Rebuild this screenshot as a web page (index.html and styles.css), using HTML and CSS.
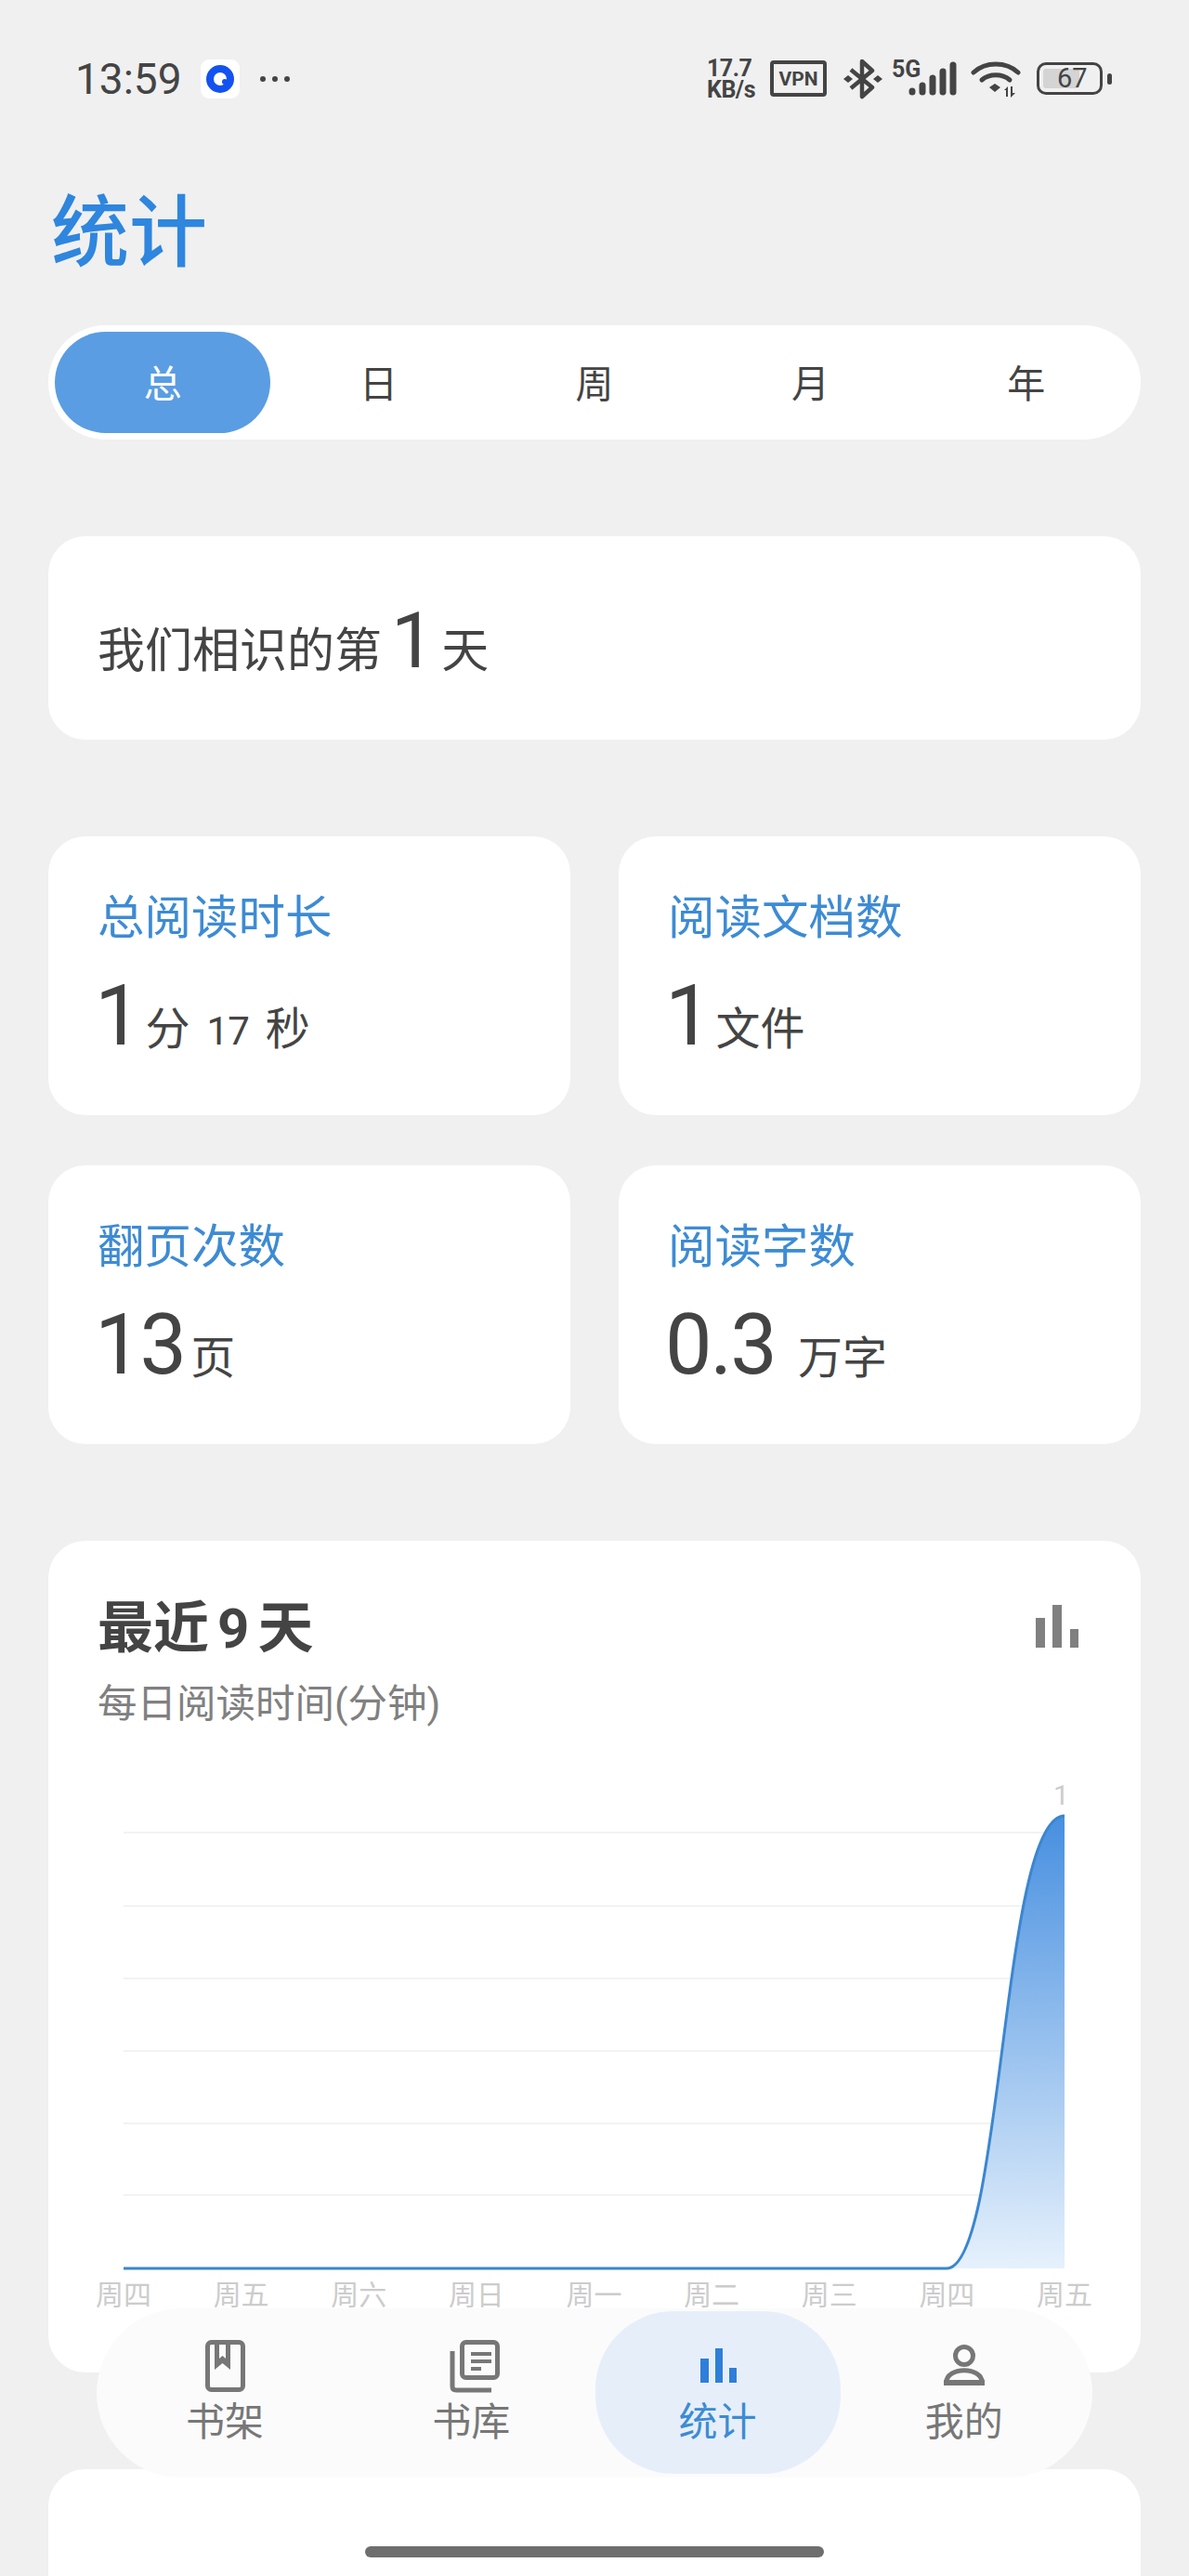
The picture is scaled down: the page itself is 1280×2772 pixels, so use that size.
FILE: index.html
```html
<!DOCTYPE html>
<html lang="zh-CN">

<head>
	<meta charset="UTF-8">
	<meta name="viewport" content="width=device-width, initial-scale=1.0">
	<title>统计</title>

	<link rel="stylesheet" href="styles.css">
</head>

<body>
	<div class="screen">
		<header class="status-bar">
			<div class="status-left">
				<span class="status-time">13:59</span>
				<span class="app-badge">
					<svg width="32" height="32" viewBox="0 0 32 32">
						<circle cx="16" cy="16" r="11" fill="none" stroke="#1352f0" stroke-width="8" />
						<circle cx="21" cy="19" r="3" fill="#1352f0" />
					</svg>
				</span>
				<svg class="status-dots" width="34" height="8" viewBox="0 0 34 8">
					<circle cx="4" cy="4" r="3" fill="#444" />
					<circle cx="17" cy="4" r="3" fill="#444" />
					<circle cx="30" cy="4" r="3" fill="#444" />
				</svg>
			</div>
			<div class="status-right">
				<span class="net-speed">17.7<br>KB/s</span>
				<span class="vpn-badge">VPN</span>
				<svg class="bluetooth-icon" width="42" height="44" viewBox="0 0 42 44">
					<path d="M8 12 L31 31 L20 41 V3 L31 13 L8 32" fill="none" stroke="#444" stroke-width="4.5" stroke-linejoin="round" />
					<path d="M5 18 L10 22 L5 26 L0 22 Z M37 18 L42 22 L37 26 L32 22 Z" fill="#444" />
				</svg>
				<svg class="signal-icon" width="70" height="52" viewBox="0 -8 70 52">
					<text x="0" y="20" class="signal-label">5G</text>
					<g fill="none" stroke="#444" stroke-width="7" stroke-linecap="round">
						<path d="M22 35 V36" />
						<path d="M33 29 V36" />
						<path d="M44 21 V36" />
						<path d="M55 14 V36" />
						<path d="M66 7 V36" />
					</g>
				</svg>
				<svg class="wifi-icon" width="54" height="40" viewBox="0 0 54 40">
					<g fill="none" stroke="#444" stroke-width="5" stroke-linecap="round">
						<path d="M3 13 C16 1 38 1 51 13" />
						<path d="M12 21 C20 14 34 14 42 21" />
					</g>
					<path d="M20 29 L26 25 L32 29 L26 34 Z" fill="#444" />
					<path d="M36 32 L40 28 V39 H38 V32 Z M43 28 H45 V35 H48 L43 40 Z" fill="#444" />
				</svg>
				<span class="battery">
					<span class="battery-fill"></span>
					<span class="battery-text">67</span>
				</span>
				<span class="battery-cap"></span>
			</div>
		</header>

		<main class="content">
			<div class="top-block">
				<h1 class="page-title">统计</h1>
				<nav class="period-tabs">
					<span class="period-tab period-tab-active">总</span>
					<span class="period-tab">日</span>
					<span class="period-tab">周</span>
					<span class="period-tab">月</span>
					<span class="period-tab">年</span>
				</nav>
			</div>

			<section class="card days-card">
				我们相识的第<span class="days-num">1</span>天
			</section>

			<section class="stat-grid">
				<div class="card stat-card">
					<div class="stat-title">总阅读时长</div>
					<div class="stat-value"><span class="big-num">1</span><span class="unit">分</span><span class="unit unit-num">17</span><span class="unit unit-after-num">秒</span></div>
				</div>
				<div class="card stat-card">
					<div class="stat-title">阅读文档数</div>
					<div class="stat-value"><span class="big-num">1</span><span class="unit">文件</span></div>
				</div>
				<div class="card stat-card">
					<div class="stat-title">翻页次数</div>
					<div class="stat-value"><span class="big-num">13</span><span class="unit">页</span></div>
				</div>
				<div class="card stat-card">
					<div class="stat-title">阅读字数</div>
					<div class="stat-value"><span class="big-num">0.3</span><span class="unit unit-wide">万字</span></div>
				</div>
			</section>

			<section class="card chart-card">
				<div class="chart-head">
					<div>
						<h2 class="chart-title">最近<span class="chart-days">9</span>天</h2>
						<p class="chart-sub">每日阅读时间(分钟)</p>
					</div>
					<svg class="chart-toggle" width="48" height="48" viewBox="0 0 48 48">
						<path d="M1 15 H11 V47 H1 Z M19 1 H29 V47 H19 Z M38 27 H47 V47 H38 Z" fill="#808080" />
					</svg>
				</div>

				<svg class="chart-plot" width="1176" height="553" viewBox="0 0 1176 553">
					<defs>
						<linearGradient id="area-fill" x1="0" y1="0" x2="0" y2="1">
							<stop offset="0" stop-color="#478fe0" />
							<stop offset="1" stop-color="#e6f1fc" />
						</linearGradient>
					</defs>
					<g stroke="#f3f3f3" stroke-width="2">
						<path d="M81 72 H1094" />
						<path d="M81 151 H1094" />
						<path d="M81 229 H1094" />
						<path d="M81 307 H1094" />
						<path d="M81 385 H1094" />
						<path d="M81 462 H1094" />
					</g>
					<path d="M967 541 C1028 541 1026 54 1094 54 V541 Z" fill="url(#area-fill)" />
					<path d="M81 541 H967 C1028 541 1026 54 1094 54" fill="none" stroke="#3b86cf" stroke-width="3" />
					<text x="1082" y="42" class="chart-point">1</text>
				</svg>

				<div class="chart-axis">
					<span>周四</span>
					<span>周五</span>
					<span>周六</span>
					<span>周日</span>
					<span>周一</span>
					<span>周二</span>
					<span>周三</span>
					<span>周四</span>
					<span>周五</span>
				</div>
			</section>

			<section class="card last-card"></section>
		</main>

		<!-- floating bottom navigation, sits over the cards -->
		<nav class="bottom-nav">
			<div class="nav-item">
				<svg width="64" height="64" viewBox="0 0 64 64">
					<rect x="13.500" y="6.500" width="38" height="51" rx="4" fill="none" stroke="#777" stroke-width="5" />
					<path d="M21 6 H38 V36 L29.500 29 L21 36 Z" fill="#777" />
					<path d="M26 9 H33 V24 L29.500 21 L26 24 Z" fill="#fbfbfb" />
				</svg>
				<span class="nav-label">书架</span>
			</div>
			<div class="nav-item">
				<svg width="64" height="64" viewBox="0 0 64 64">
					<rect x="22.500" y="6.500" width="38" height="38" rx="4" fill="none" stroke="#777" stroke-width="5" />
					<path d="M32 17 H54 V21 H32 Z M32 25 H54 V29 H32 Z M32 33 H43 V37 H32 Z" fill="#777" />
					<path d="M12 16 V54 Q12 58 16 58 H54" fill="none" stroke="#777" stroke-width="5" />
				</svg>
				<span class="nav-label">书库</span>
			</div>
			<div class="nav-item nav-item-active">
				<svg width="64" height="64" viewBox="0 0 64 64">
					<path d="M13 24 H22 V50 H13 Z M29 13 H37 V50 H29 Z M44 34 H52 V50 H44 Z" fill="#2e7fd9" />
				</svg>
				<span class="nav-label">统计</span>
			</div>
			<div class="nav-item">
				<svg width="64" height="64" viewBox="0 0 64 64">
					<circle cx="32" cy="21" r="9.500" fill="none" stroke="#777" stroke-width="5" />
					<path d="M12.500 50.500 C12.500 32 51.500 32 51.500 50.500 Z" fill="none" stroke="#777" stroke-width="5" stroke-linejoin="round" />
					<path d="M10 47 H54 V53 H10 Z" fill="#777" />
				</svg>
				<span class="nav-label">我的</span>
			</div>
		</nav>

		<div class="home-bar"></div>
	</div>
</body>

</html>
```

FILE: styles.css
```css
* {
	margin: 0;
	padding: 0;
	box-sizing: border-box;
}

body {
	--text-color: #444;
	--blue-color: #3d8bd4;
	--title-color: #2e86de;
	--muted-color: #808080;
	--background-color: #f0f0f0;

	background-color: var(--background-color);
	color: var(--text-color);
	font-family: Roboto, "Noto Sans CJK SC", sans-serif;
}

.screen {
	width: 1280px;
	height: 2772px;

	position: relative;
	overflow: hidden;
}

/* status bar */
.status-bar {
	height: 166px;
	padding: 3px 83px 0 81px;

	display: flex;
	justify-content: space-between;
	align-items: center;
}

.status-left {
	display: flex;
	align-items: center;
}

.status-time {
	width: 135px;
	font-size: 46px;
}

.app-badge {
	width: 42px;
	height: 42px;
	margin-right: 21px;

	display: flex;
	justify-content: center;
	align-items: center;

	border-radius: 9px;
	background-color: #fff;
}

.status-right {
	display: flex;
	align-items: center;
}

.net-speed {
	width: 68px;
	font-size: 25px;
	font-weight: 700;
	line-height: 23px;
	letter-spacing: -0.5px;
}

.vpn-badge {
	width: 61px;
	height: 39px;

	display: flex;
	justify-content: center;
	align-items: center;

	border: 4px solid var(--text-color);
	border-radius: 4px;
	font-size: 21px;
	font-weight: 700;
}

.bluetooth-icon {
	margin-left: 18px;
}

.signal-icon {
	margin-left: 10px;
	margin-bottom: 8px;
}

.signal-label {
	font-size: 25px;
	font-weight: 700;
	fill: var(--text-color);
}

.wifi-icon {
	margin-left: 15px;
}

.battery {
	width: 71px;
	height: 35px;
	margin-left: 17px;
	padding: 4px;

	position: relative;
	display: flex;

	border: 3px solid var(--text-color);
	border-radius: 10px;
}

.battery-fill {
	width: 39px;
	background-color: #d4d4d4;
	border-radius: 3px;
}

.battery-text {
	position: absolute;
	left: 19px;
	top: -3px;

	font-size: 29px;
	line-height: 35px;
}

.battery-cap {
	width: 5px;
	height: 12px;
	margin-left: 5px;

	border-radius: 3px;
	background-color: var(--text-color);
}

/* page content */
.content {
	padding: 0 52px;

	display: flex;
	flex-direction: column;
	gap: 104px;
}

.page-title {
	height: 100px;
	margin: 36px 0 48px 3px;

	color: var(--title-color);
	font-size: 84px;
	font-weight: 500;
	line-height: 100px;
}

.period-tabs {
	height: 123px;
	padding: 7px;

	display: grid;
	grid-template-columns: repeat(5, 1fr);

	border-radius: 62px;
	background-color: #fff;
}

.period-tab {
	padding-bottom: 3px;

	display: flex;
	justify-content: center;
	align-items: center;

	border-radius: 55px;
	font-size: 41px;
}

.period-tab-active {
	background-color: #5a9de2;
	color: #fff;
}

.card {
	border-radius: 40px;
	background-color: #fff;
}

.days-card {
	height: 219px;
	padding: 3px 53px 0;

	display: flex;
	align-items: baseline;

	font-size: 51px;
	line-height: 219px;
}

.days-num {
	margin: 0 7px 0 10px;
	font-size: 84px;
}

.big-num {
	margin-left: -3px;
	font-size: 90px;
	letter-spacing: -2px;
}

.stat-grid {
	display: grid;
	grid-template-columns: 1fr 1fr;
	column-gap: 52px;
	row-gap: 54px;
}

.stat-card {
	height: 300px;
	padding: 58px 53px 0;
}

.stat-title {
	color: var(--blue-color);
	font-size: 50.500px;
	line-height: 60px;
}

.stat-value {
	margin-top: 26px;

	display: flex;
	align-items: baseline;

	font-size: 48px;
	line-height: 100px;
}

.unit {
	margin-left: 6px;
}

.unit-num {
	margin-left: 18px;
	font-size: 42px;
	letter-spacing: -1px;
}

.unit-after-num {
	margin-left: 18px;
}

.unit-wide {
	margin-left: 24px;
}

.chart-card {
	height: 895px;
}

.chart-head {
	height: 242px;
	padding: 55px 66px 0 53px;

	display: flex;
	justify-content: space-between;
	align-items: flex-start;
}

.chart-title {
	font-size: 60px;
	font-weight: 700;
	line-height: 80px;
}

.chart-days {
	margin: 0 9px;
}

.chart-sub {
	margin-top: 11px;

	color: var(--muted-color);
	font-size: 42.500px;
	line-height: 60px;
}

.chart-toggle {
	margin-top: 13px;
}

.chart-plot {
	display: block;
}

.chart-point {
	fill: #ccc;
	font-size: 30px;
}

.chart-axis {
	padding: 0 52px 0 51px;

	display: flex;
	justify-content: space-between;

	color: #ccc;
	font-size: 30px;
	line-height: 34px;
}

.last-card {
	height: 300px;
}

/* floating parts */
.bottom-nav {
	width: 1072px;
	height: 182px;
	padding: 3px 6px;

	position: absolute;
	left: 104px;
	top: 2484px;

	display: grid;
	grid-template-columns: repeat(4, 1fr);
	column-gap: 1px;

	border-radius: 91px;
	background-color: rgba(251, 251, 251, 0.96);
	color: #777;
}

.nav-item {
	height: 175px;
	padding-top: 27px;

	display: flex;
	flex-direction: column;
	align-items: center;

	border-radius: 84px;
}

.nav-item-active {
	background-color: #e6eff9;
	color: var(--blue-color);
}

.nav-label {
	margin-top: 4px;
	font-size: 42px;
	line-height: 50px;
}

.home-bar {
	width: 494px;
	height: 12px;

	position: absolute;
	left: 393px;
	top: 2740px;

	border-radius: 6px;
	background-color: #6e6e6e;
}
```
